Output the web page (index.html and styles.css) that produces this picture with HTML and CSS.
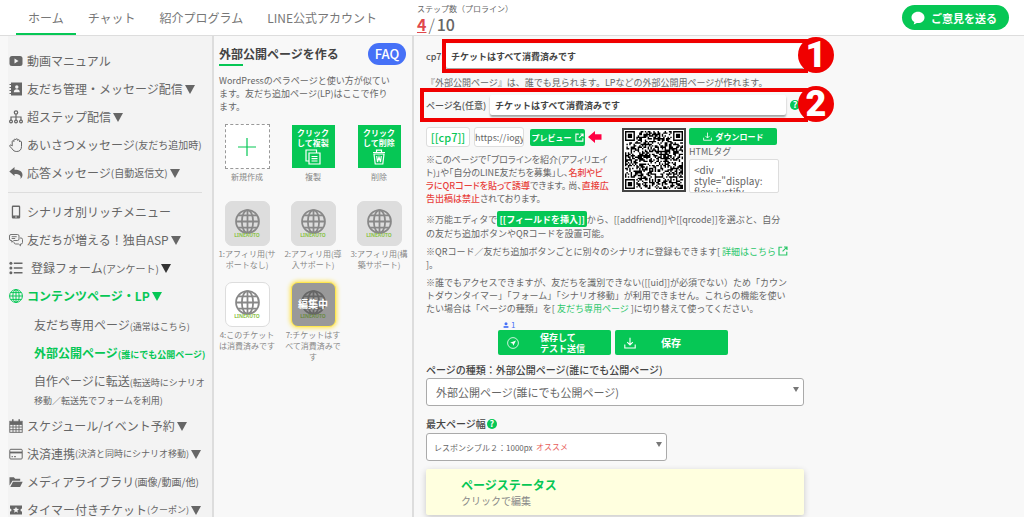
FILE: index.html
```html
<!DOCTYPE html>
<html lang="ja">
<head>
  <meta charset="UTF-8" />
  <meta name="viewport" content="width=device-width, initial-scale=1.0" />
  <title>外部公開ページを作る</title>
  <link rel="stylesheet" href="styles.css">
</head>
<body>

<!-- shared icons -->
<svg class="sprite" aria-hidden="true">
  <symbol id="i-globe" viewBox="0 0 24 24">
    <g fill="none" stroke="currentColor" stroke-width="1.7">
      <circle cx="12" cy="12" r="11"/>
      <ellipse cx="12" cy="12" rx="5.4" ry="11"/>
      <path d="M12 1v22M1 12h22M3 6.2h18M3 17.8h18"/>
    </g>
  </symbol>
  <symbol id="i-external" viewBox="0 0 12 12">
    <path d="M5 1.5H1.2v9.3h9.3V7M7.2 1.2h3.6v3.6M10.6 1.4L5.5 6.5" fill="none" stroke="currentColor" stroke-width="1.4"/>
  </symbol>
  <symbol id="i-download" viewBox="0 0 12 12">
    <path d="M6 .8v7M3.2 5.2L6 8l2.8-2.8M.8 7.6v3.4h10.4V7.6" fill="none" stroke="currentColor" stroke-width="1.1"/>
  </symbol>
</svg>

<header class="header">
  <nav class="nav">
    <a href="#" class="active">ホーム</a>
    <a href="#">チャット</a>
    <a href="#">紹介プログラム</a>
    <a href="#">LINE公式アカウント</a>
  </nav>
  <div class="steps">
    <div class="steps-label">ステップ数（プロライン）</div>
    <div class="steps-count"><a href="#">4</a><span>/</span>10</div>
  </div>
  <button type="button" class="feedback">
    <svg viewBox="0 0 14 14"><path d="M7 .8C3.300.8.5 3.300.5 6.400c0 2 1.200 3.700 2.900 4.700L2.700 13.500l3.200-1.600c.4.1.7.1 1.100.1 3.700 0 6.500-2.500 6.500-5.600S10.700.8 7 .8z" fill="#fff"/></svg>
    ご意見を送る
  </button>
</header>

<div class="layout">

  <aside class="sidebar">
    <ul class="menu">
      <li><a href="#"><svg viewBox="0 0 14 14"><rect x=".5" y="2" width="13" height="10" rx="2.500" fill="currentColor"/><path d="M5.500 4.600v4.800L9.500 7z" fill="#f3f3f3"/></svg>動画マニュアル</a></li>
      <li><a href="#"><svg viewBox="0 0 14 14"><path d="M2 .5h11v13H2z" fill="currentColor"/><path d="M.5 2.500h2M.5 5.500h2M.5 8.500h2M.5 11.500h2" stroke="currentColor" stroke-width="1.200"/><circle cx="7.800" cy="5" r="1.700" fill="#f3f3f3"/><path d="M4.800 10.300c0-2 1.200-3 3-3s3 1 3 3z" fill="#f3f3f3"/></svg>友だち管理・メッセージ配信<i></i></a></li>
      <li><a href="#"><svg viewBox="0 0 14 14" fill="none" stroke="currentColor" stroke-width="1.200"><circle cx="7" cy="2.500" r="1.700"/><path d="M7 4.200v6M2 10V7h10v3"/><circle cx="2" cy="11.500" r="1.400"/><circle cx="7" cy="11.500" r="1.400"/><circle cx="12" cy="11.500" r="1.400"/></svg>超ステップ配信<i></i></a></li>
      <li><a href="#"><svg viewBox="0 0 14 14" fill="none" stroke="currentColor"><path d="M3.200 8V3.500c0-1.100 1.700-1.100 1.700 0V2c0-1.100 1.900-1.100 1.900 0v-.4c0-1.100 1.900-1.100 1.900 0V2.500c0-1.100 1.900-1 1.900 0V4c0-1 1.900-.9 1.900 0v4.500c0 3-1.700 5-4.700 5-2.500 0-3.600-1-4.600-2.600L1 8.500c-.8-1.300.6-2 1.300-1.200z"/></svg>あいさつメッセージ<small>(友だち追加時)</small></a></li>
      <li><a href="#"><svg viewBox="0 0 14 14"><path d="M.3 5.500L5.500 1v2.700c5 .1 8 1.500 8 5.300 0 1.500-.8 3-2 3.900.8-3.400-.9-5-6-5V10z" fill="currentColor"/></svg>応答メッセージ<small>(自動返信文)</small><i></i></a></li>
    </ul>
    <hr>
    <ul class="menu">
      <li><a href="#"><svg viewBox="0 0 14 14"><path d="M4 .5h6a1.200 1.200 0 0 1 1.200 1.200v10.600A1.200 1.200 0 0 1 10 13.500H4a1.200 1.200 0 0 1-1.200-1.200V1.700A1.200 1.200 0 0 1 4 .5zM4.100 2v8.600h5.800V2z" fill="currentColor" fill-rule="evenodd"/><circle cx="7" cy="12" r=".7" fill="#f3f3f3"/></svg>シナリオ別リッチメニュー</a></li>
      <li><a href="#"><svg viewBox="0 0 14 14" fill="none" stroke="currentColor" stroke-width=".9"><path d="M2 1.500h6.500a1.500 1.500 0 0 1 1.500 1.500v3a1.500 1.500 0 0 1-1.500 1.500H5L2.800 9.200V7.500H2A1.500 1.500 0 0 1 .5 6V3A1.500 1.500 0 0 1 2 1.500zM2.700 3.700h5M2.700 5.500h3.500M11 5h1a1.500 1.500 0 0 1 1.500 1.500v3A1.500 1.500 0 0 1 12 11h-.5v1.800L9.500 11H6.800C5.500 11 5 10.300 5 9"/></svg>友だちが増える！独自ASP<i></i></a></li>
      <li><a href="#"><svg viewBox="0 0 14 14"><path d="M4.800 2.200h8.700M4.800 7h8.700M4.800 11.800h8.700" stroke="currentColor" stroke-width="1.500"/><circle cx="1.900" cy="2.200" r="1.500" fill="currentColor"/><circle cx="1.900" cy="7" r="1.500" fill="currentColor"/><circle cx="1.900" cy="11.800" r="1.500" fill="currentColor"/></svg><span class="indent">登録フォーム<small>(アンケート)</small></span><i class="dark"></i></a></li>
      <li><a href="#" class="current"><svg><use href="#i-globe"/></svg>コンテンツページ・LP<i></i></a>
        <ul class="submenu">
          <li><a href="#">友だち専用ページ<small>(通常はこちら)</small></a></li>
          <li><a href="#" class="current">外部公開ページ<small>(誰にでも公開ページ)</small></a></li>
          <li class="two-line"><a href="#">自作ページに転送<small>(転送時にシナリオ<br>移動／転送先でフォームを利用)</small></a></li>
        </ul>
      </li>
      <li><a href="#"><svg viewBox="0 0 14 14" fill="none" stroke="currentColor" stroke-width=".9"><rect x=".8" y="2.300" width="12.400" height="11"/><path d="M.8 5.500h12.400M.8 8h12.400M.8 10.700h12.400M4 5.500v7.800M7 5.500v7.800M10 5.500v7.800"/><path d="M1 4h12" stroke-width="2.500"/><path d="M3.800.3v3M10.200.3v3" stroke-width="1.500"/></svg>スケジュール/イベント予約<i></i></a></li>
      <li><a href="#"><svg viewBox="0 0 14 14"><rect x=".8" y="2.300" width="12.400" height="9.700" rx="1" fill="none" stroke="currentColor"/><path d="M1 5.500h12" stroke="currentColor" stroke-width="1.800"/><path d="M2.500 9.700h1.500M5 9.700h2" stroke="currentColor"/></svg>決済連携<small class="long">(決済と同時にシナリオ移動)</small><i></i></a></li>
      <li><a href="#"><svg viewBox="0 0 14 14"><path d="M.5 10.500V2.300h4.300l1.400 1.500h5v2H3.500zM4 6.700h9.700l-2.600 5.300H1.300z" fill="currentColor"/></svg>メディアライブラリ<small>(画像/動画/他)</small></a></li>
      <li><a href="#"><svg viewBox="0 0 14 14"><path d="M1 2.500h12v3a1.500 1.500 0 0 0 0 3v3H1v-3a1.500 1.500 0 0 0 0-3z" fill="currentColor"/><path d="M7 3.800l.9 2 2.200.2-1.700 1.500.5 2.200L7 8.500 5.100 9.700l.5-2.200L3.900 6l2.200-.2z" fill="#f3f3f3"/></svg>タイマー付きチケット<small class="long">(クーポン)</small><i></i></a></li>
    </ul>
  </aside>

  <section class="pages">
    <div class="pages-head">
      <h1>外部公開ページを作る</h1>
      <a href="#" class="faq">FAQ</a>
    </div>
    <p class="lead">WordPressのペラページと使い方が似てい<br>ます。友だち追加ページ(LP)はここで作り<br>ます。</p>

    <div class="tiles">
      <button type="button" class="tile new">
        <span class="thumb"><svg viewBox="0 0 18 18"><path d="M9 0v18M0 9h18" stroke="#06c755" stroke-width="1.200"/></svg></span>
        新規作成
      </button>
      <button type="button" class="tile action">
        <span class="thumb"><span>クリック</span><span>して複製</span><svg viewBox="0 0 16 16" fill="none" stroke="#fff" stroke-width="1.200"><path d="M3.500 12H1V1h10.500v2.500M4 4h11v11H4zM6.500 7.500h6M6.500 9.700h6M6.500 12h6"/></svg></span>
        複製
      </button>
      <button type="button" class="tile action">
        <span class="thumb"><span>クリック</span><span>して削除</span><svg viewBox="0 0 16 16" fill="none" stroke="#fff" stroke-width="1.200"><path d="M2 3.500h12M5.500 3.300V1.200h5v2.100M3 5h10l-1.200 10H4.200zM5.700 7l.8 6L8 8l1.500 5 .8-6"/></svg></span>
        削除
      </button>
      <button type="button" class="tile off">
        <span class="thumb"><svg><use href="#i-globe"/></svg><b>LINEAUTO</b></span>
        1:アフィリ用(サ<br>ポートなし)
      </button>
      <button type="button" class="tile off">
        <span class="thumb"><svg><use href="#i-globe"/></svg><b>LINEAUTO</b></span>
        2:アフィリ用(導<br>入サポート)
      </button>
      <button type="button" class="tile off">
        <span class="thumb"><svg><use href="#i-globe"/></svg><b>LINEAUTO</b></span>
        3:アフィリ用(構<br>築サポート)
      </button>
      <button type="button" class="tile">
        <span class="thumb"><svg><use href="#i-globe"/></svg><b>LINEAUTO</b></span>
        4:このチケット<br>は消費済みです
      </button>
      <button type="button" class="tile editing">
        <span class="thumb"><svg><use href="#i-globe"/></svg><b>LINEAUTO</b><em>編集中</em></span>
        7:チケットはす<br>べて消費済みで<br>す
      </button>
    </div>
  </section>

  <main class="editor">
    <form class="form">
      <div class="field title-field">
        <label for="cp_title">cp7:</label>
        <input type="text" id="cp_title" value="チケットはすべて消費済みです">
        <div class="callout"><span>1</span></div>
      </div>

      <p class="hint">『外部公開ページ』は、誰でも見られます。LPなどの外部公開用ページが作れます。</p>

      <div class="field name-field">
        <label for="page_name">ページ名(任意)</label>
        <input type="text" id="page_name" value="チケットはすべて消費済みです">
        <span class="help">?</span>
        <div class="callout"><span>2</span></div>
      </div>

      <div class="share">
        <div class="share-text">
          <div class="codes">
            <input type="text" class="code" value="[[cp7]]" aria-label="コード" readonly>
            <input type="text" class="url" value="https://iogy" aria-label="URL" readonly>
            <button type="button" class="btn preview">プレビュー<svg><use href="#i-external"/></svg></button>
            <svg class="arrow" viewBox="0 0 14 12"><path d="M0 6L7 0v3.200h6.500v5.600H7V12z" fill="#ff0043"/></svg>
          </div>
          <p>※このページで「プロラインを紹介(アフィリエイ<br>ト)」や「自分のLINE友だちを募集」し、<strong>名刺やビ<br>ラにQRコードを貼って誘導</strong>できます。 尚、<strong>直接広<br>告出稿は禁止</strong>されております。</p>
        </div>
        <svg class="qr" id="qr" viewBox="0 0 41 41" role="img" aria-label="QRコード"></svg>
        <div class="share-tag">
          <button type="button" class="btn download"><svg><use href="#i-download"/></svg>ダウンロード</button>
          <label for="html_tag">HTMLタグ</label>
          <textarea id="html_tag" readonly>&lt;div
style="display:
flex; justify-</textarea>
        </div>
      </div>

      <div class="notes">
        <p>※万能エディタで<button type="button" class="btn insert">[[フィールドを挿入]]</button>から、[[addfriend]]や[[qrcode]]を選ぶと、自分<br>の友だち追加ボタンやQRコードを設置可能。</p>
        <p>※QRコード／友だち追加ボタンごとに別々のシナリオに登録もできます[ <a href="#">詳細はこちら <svg><use href="#i-external"/></svg></a><br>]。</p>
        <p>※誰でもアクセスできますが、友だちを識別できない([[uid]]が必須でない）ため「カウン<br>トダウンタイマー」「フォーム」「シナリオ移動」が利用できません。これらの機能を使い<br>たい場合は「ページの種類」を[ <a href="#">友だち専用ページ</a> ]に切り替えて使ってください。</p>
      </div>

      <div class="save">
        <div class="testers"><svg viewBox="0 0 8 8"><circle cx="4" cy="2.200" r="2" fill="currentColor"/><path d="M.8 7.800V5.500h6.400v2.300z" fill="currentColor"/></svg>1</div>
        <div class="save-buttons">
          <button type="submit" class="btn"><svg viewBox="0 0 12 12" fill="none" stroke="currentColor" stroke-width=".8"><circle cx="6" cy="6" r="5.400"/><path d="M3.200 5.800L9 3.500 6.300 8.800 5.600 6.600z" fill="currentColor" stroke="none"/></svg><span>保存して<br>テスト送信</span></button>
          <button type="submit" class="btn"><svg><use href="#i-download"/></svg><span class="only">保存</span></button>
        </div>
      </div>

      <label class="caption" for="page_type">ページの種類：外部公開ページ(誰にでも公開ページ)</label>
      <div class="select">
        <select id="page_type">
          <option>外部公開ページ(誰にでも公開ページ)</option>
          <option>友だち専用ページ(通常はこちら)</option>
        </select>
      </div>

      <div class="caption width-caption"><label for="page_width">最大ページ幅</label><span class="help">?</span></div>
      <div class="select narrow">
        <select id="page_width">
          <option>レスポンシブル２：1000px</option>
        </select>
        <span class="recommend">オススメ</span>
      </div>

      <div class="status">
        <h2>ページステータス</h2>
        <p>クリックで編集</p>
      </div>
    </form>
  </main>
</div>

<script src="script.js"></script>
</body>
</html>
```
FILE: styles.css
```css
* {
  box-sizing: border-box;
}
body {
  margin: 0;
  height: 100vh;
  display: flex;
  flex-direction: column;
  overflow: hidden;
  background-color: #f8f8f8;
  color: #666;
  font-family: "Noto Sans CJK JP", sans-serif;
  font-size: 9px;
}
a {
  color: inherit;
  text-decoration: none;
}
p, h1, h2, ul {
  margin: 0;
  padding: 0;
}
ul {
  list-style: none;
}
button, input, select, textarea {
  font: inherit;
  color: inherit;
}
button {
  border: none;
  cursor: pointer;
}
.sprite {
  display: none;
}

/* header */
.header {
  display: flex;
  flex: none;
  height: 36px;
  padding: 0 15px 0 16px;
  background-color: #fff;
  border-bottom: 1px solid #ddd;
}
.nav {
  display: flex;
}
.nav a {
  padding: 0 12px;
  font-size: 12px;
  line-height: 35px;
  color: #777;
  white-space: nowrap;
}
.nav a.active {
  border-bottom: 2px solid #06c755;
}
.steps {
  margin-left: 28px;
  white-space: nowrap;
}
.steps-label {
  padding-top: 1px;
  font-size: 8px;
  line-height: 15px;
}
.steps-count {
  font-size: 16px;
  line-height: 17px;
  font-weight: 500;
}
.steps-count a {
  color: #e0484c;
  font-weight: 700;
  text-decoration: underline;
}
.steps-count span {
  padding: 0 2px;
  font-weight: 300;
}
.feedback {
  display: flex;
  align-items: center;
  gap: 6px;
  height: 25px;
  margin: 5px 0 0 auto;
  padding: 0 12px 0 9px;
  border-radius: 13px;
  background-color: #06c755;
  color: #fff;
  font-size: 11px;
  font-weight: 700;
  white-space: nowrap;
}
.feedback svg {
  width: 14px;
  height: 14px;
}

.layout {
  display: flex;
  flex: 1;
  min-height: 0;
}

/* left menu */
.sidebar {
  flex: none;
  width: 214px;
  padding: 11px 10px 0 0;
  border-left: 8px solid #f8f8f8;
  border-right: 2px solid #ddd;
  background-color: #f3f3f3;
  overflow: hidden;
}
.sidebar hr {
  height: 1px;
  margin: 5px 0;
  border: none;
  background-color: #ddd;
}
.menu a {
  display: flex;
  align-items: center;
  height: 28px;
  font-size: 12px;
  line-height: 16px;
  white-space: nowrap;
}
.menu svg {
  flex: none;
  width: 14px;
  height: 14px;
  margin: 0 4px 0 1px;
}
.menu small {
  font-size: 10px;
}
.menu .long, .submenu small {
  font-size: 9px;
}
.menu i {
  margin-left: 2px;
  border: 5px solid transparent;
  border-top: 9px solid currentColor;
  border-bottom: none;
}
.menu i.dark {
  border-top-color: #333;
}
.menu .indent {
  padding-left: 4px;
}
.menu .current {
  color: #06c755;
  font-weight: 700;
}
.submenu {
  margin: 1px 0;
  padding-left: 26px;
}
.submenu a {
  display: block;
  padding: 6px 0;
}
.submenu .two-line a {
  height: 44px;
}

/* page list */
.pages {
  flex: none;
  width: 200px;
  padding-top: 7px;
  border-right: 2px solid #ddd;
}
.pages-head {
  display: flex;
  justify-content: space-between;
  padding: 0 6px 0 5px;
}
.pages h1 {
  position: relative;
  font-size: 12px;
  line-height: 22px;
  color: #444;
}
.pages h1::after {
  content: "";
  position: absolute;
  left: 0;
  bottom: -1px;
  width: 24px;
  height: 2px;
  background-color: #06c755;
}
.faq {
  width: 38px;
  border-radius: 11px;
  background-color: #4671f7;
  color: #fff;
  font-size: 13px;
  font-weight: 500;
  line-height: 22px;
  text-align: center;
}
.lead {
  margin: 9px 0 11px 5px;
  line-height: 13px;
  white-space: nowrap;
}
.tiles {
  display: grid;
  grid-template-columns: repeat(3, 66px);
  grid-template-rows: 64px 68px auto;
  row-gap: 13px;
  align-items: start;
}
.tile {
  padding: 0;
  background: none;
  color: #888;
  font-size: 8px;
  line-height: 11px;
  text-align: center;
  white-space: nowrap;
}
.thumb {
  position: relative;
  display: flex;
  flex-direction: column;
  align-items: center;
  justify-content: center;
  width: 45px;
  height: 45px;
  margin: 0 auto 2px;
  border: 1px solid #ddd;
  border-radius: 7px;
  background-color: #fff;
}
.thumb svg {
  width: 25px;
  height: 25px;
  color: #888;
}
.thumb b {
  margin-top: -2px;
  color: #8bc34a;
  font-family: "Noto Sans", sans-serif;
  font-size: 5px;
  line-height: 7px;
}
.new .thumb {
  border: 1px dashed #999;
  border-radius: 0;
}
.new svg {
  width: 18px;
  height: 18px;
}
.action .thumb {
  border-radius: 1px;
  border-color: #f8f8f8;
  background-color: #06c755;
  background-clip: padding-box;
  color: #fff;
  font-weight: 700;
  line-height: 10px;
}
.action svg {
  width: 16px;
  height: 16px;
  margin-top: 1px;
  color: #fff;
}
.off .thumb {
  background-color: #ddd;
}
.editing .thumb {
  border-color: #ffe84d;
  background-color: #999;
  box-shadow: 0 0 4px 1px #ffe34d;
}
.editing svg {
  color: #666;
}
.editing b {
  color: #6b8a45;
}
.editing em {
  position: absolute;
  left: 0;
  right: 0;
  top: 15px;
  color: #fff;
  font-size: 10px;
  font-style: normal;
  font-weight: 700;
}

/* editor */
.editor {
  flex: 1;
  min-width: 0;
  padding: 6px 12px 0;
  overflow: hidden;
}
.form {
  max-width: 378px;
}
.field {
  position: relative;
  display: flex;
  align-items: center;
  height: 28px;
}
.field label {
  flex: none;
  color: #555;
  font-weight: 500;
  white-space: nowrap;
}
.field input {
  flex: 1;
  min-width: 0;
  height: 24px;
  padding: 0 5px;
  border: none;
  border-radius: 2px;
  background-color: #fff;
  box-shadow: 0 2px 2px rgba(0, 0, 0, 0.35);
  color: #444;
  font-weight: 700;
}
.title-field label {
  width: 20px;
}
.name-field label {
  width: 64px;
}
.name-field input {
  height: 20px;
}
.name-field .help {
  margin: 0 4px;
}
.callout {
  position: absolute;
  left: -6px;
  right: -4px;
  top: -3px;
  height: 34px;
  border: 4px solid #f00000;
  pointer-events: none;
}
.title-field .callout {
  left: 16px;
}
.callout span {
  position: absolute;
  right: -30px;
  top: -6px;
  width: 36px;
  height: 36px;
  border-radius: 50%;
  background-color: #f00000;
  color: #fff;
  font-family: Roboto, sans-serif;
  font-size: 36px;
  font-weight: 900;
  line-height: 36px;
  text-align: center;
}
.hint {
  padding-top: 5px;
  line-height: 16px;
  white-space: nowrap;
}
.help {
  flex: none;
  width: 10px;
  height: 10px;
  border-radius: 50%;
  background-color: #06c755;
  color: #fff;
  font-size: 9px;
  font-weight: 700;
  line-height: 10px;
  text-align: center;
}
.btn {
  padding: 0;
  border-radius: 2px;
  background-color: #06c755;
  color: #fff;
  font-weight: 700;
  white-space: nowrap;
}
.share {
  display: flex;
  margin-top: 8px;
}
.share-text {
  width: 196px;
}
.share-text p {
  margin-top: 6px;
  font-feature-settings: "palt";
  line-height: 13px;
  white-space: nowrap;
}
.share-text strong {
  color: #e8413c;
  font-weight: 500;
}
.codes {
  display: flex;
  align-items: center;
}
.codes input {
  height: 20px;
  padding: 0;
  border: 1px solid #ddd;
  border-radius: 3px;
  background-color: #fff;
}
.codes .code {
  width: 44px;
  margin-right: 4px;
  color: #06c755;
  font-size: 11px;
  font-weight: 500;
  text-align: center;
}
.codes .url {
  width: 50px;
  margin-right: 6px;
}
.preview {
  display: flex;
  align-items: center;
  justify-content: center;
  gap: 3px;
  width: 55px;
  height: 17px;
  font-size: 8px;
}
.preview svg {
  width: 9px;
  height: 9px;
}
.arrow {
  width: 14px;
  height: 12px;
  margin-left: 3px;
}
.qr {
  flex: none;
  width: 64px;
  height: 64px;
  margin-top: 1px;
  padding: 1px;
  border: 2px solid #444;
  background-color: #fff;
}
.share-tag {
  display: flex;
  flex-direction: column;
  width: 90px;
  margin: 1px 0 0 3px;
}
.share-tag label {
  line-height: 14px;
}
.share-tag textarea {
  height: 34px;
  padding: 4px;
  border: 1px solid #ddd;
  border-radius: 2px;
  background-color: #fff;
  font-size: 10px;
  line-height: 11px;
  overflow: hidden;
  resize: none;
}
.download {
  display: flex;
  align-items: center;
  justify-content: center;
  gap: 4px;
  width: 88px;
  height: 17px;
  font-size: 8px;
}
.download svg {
  width: 9px;
  height: 9px;
}
.notes {
  padding-top: 1px;
}
.notes p {
  margin-top: 5px;
  line-height: 13px;
  white-space: nowrap;
}
.notes a {
  color: #2cc76a;
}
.notes a svg {
  width: 10px;
  height: 10px;
  vertical-align: -1px;
}
.insert {
  height: 16px;
  padding: 0 2px;
}
.save {
  width: 230px;
  margin: 5px 0 0 72px;
}
.testers {
  display: flex;
  align-items: center;
  gap: 2px;
  padding-left: 5px;
  color: #4671f7;
  font-size: 8px;
  line-height: 10px;
}
.testers svg {
  width: 6px;
  height: 6px;
}
.save-buttons {
  display: flex;
  gap: 4px;
}
.save-buttons .btn {
  display: flex;
  flex: 1;
  align-items: center;
  gap: 21px;
  height: 25px;
  padding-left: 9px;
  line-height: 11px;
  text-align: left;
}
.save-buttons svg {
  width: 12px;
  height: 12px;
}
.save-buttons .only {
  padding-left: 4px;
  font-size: 10px;
}
.caption {
  display: block;
  margin-top: 6px;
  color: #444;
  font-size: 10px;
  font-weight: 500;
  line-height: 17px;
}
.width-caption {
  display: flex;
  align-items: center;
  gap: 1px;
  margin: 9px 0 1px;
}
.select {
  position: relative;
}
.select select {
  display: block;
  width: 100%;
  height: 28px;
  padding: 0 9px;
  border: 1px solid #aaa;
  border-radius: 3px;
  background-color: #fff;
  font-size: 11px;
  appearance: none;
}
.select::after {
  content: "";
  position: absolute;
  right: 5px;
  top: 9px;
  border: 3px solid transparent;
  border-top: 5px solid #777;
  border-bottom: none;
}
.narrow {
  width: 241px;
}
.narrow select {
  padding: 0 7px;
  font-size: 8px;
}
.recommend {
  position: absolute;
  left: 110px;
  top: 0;
  color: #e8605c;
  font-size: 8px;
  line-height: 28px;
  pointer-events: none;
}
.status {
  margin-top: 8px;
  padding: 7px 35px;
  border-radius: 2px;
  background-color: #ffffdf;
  box-shadow: 0 2px 6px rgba(0, 0, 0, 0.2);
}
.status h2 {
  color: #06c755;
  font-size: 12px;
  line-height: 18px;
}
.status p {
  color: #888;
  font-size: 10px;
  line-height: 14px;
}
```
FILE: script.js
```js
// draws the QR thumbnail: three finders, one alignment mark and the data modules
var SIZE = 41;

function ring(x, y, left, top, size) {
  var d = Math.min(x - left, y - top, left + size - 1 - x, top + size - 1 - y);
  return d < 0 ? null : d !== 1;
}

function moduleOn(x, y, noise) {
  var finders = [[0, 0], [SIZE - 7, 0], [0, SIZE - 7]];
  for (var i = 0; i < finders.length; i++) {
    var left = finders[i][0];
    var top = finders[i][1];
    var on = ring(x, y, left, top, 7);
    if (on !== null) return on;
    if (x >= left - 1 && x <= left + 7 && y >= top - 1 && y <= top + 7) return false;
  }
  var mark = ring(x, y, SIZE - 9, SIZE - 9, 5);
  return mark !== null ? mark : noise;
}

var seed = 7;
var d = "";
for (var y = 0; y < SIZE; y++) {
  for (var x = 0; x < SIZE; x++) {
    seed = (seed * 16807) % 2147483647;
    if (moduleOn(x, y, seed % 100 < 50)) d += "M" + x + " " + y + "h1v1h-1z";
  }
}
var path = document.createElementNS("http://www.w3.org/2000/svg", "path");
path.setAttribute("d", d);
document.getElementById("qr").appendChild(path);
```
